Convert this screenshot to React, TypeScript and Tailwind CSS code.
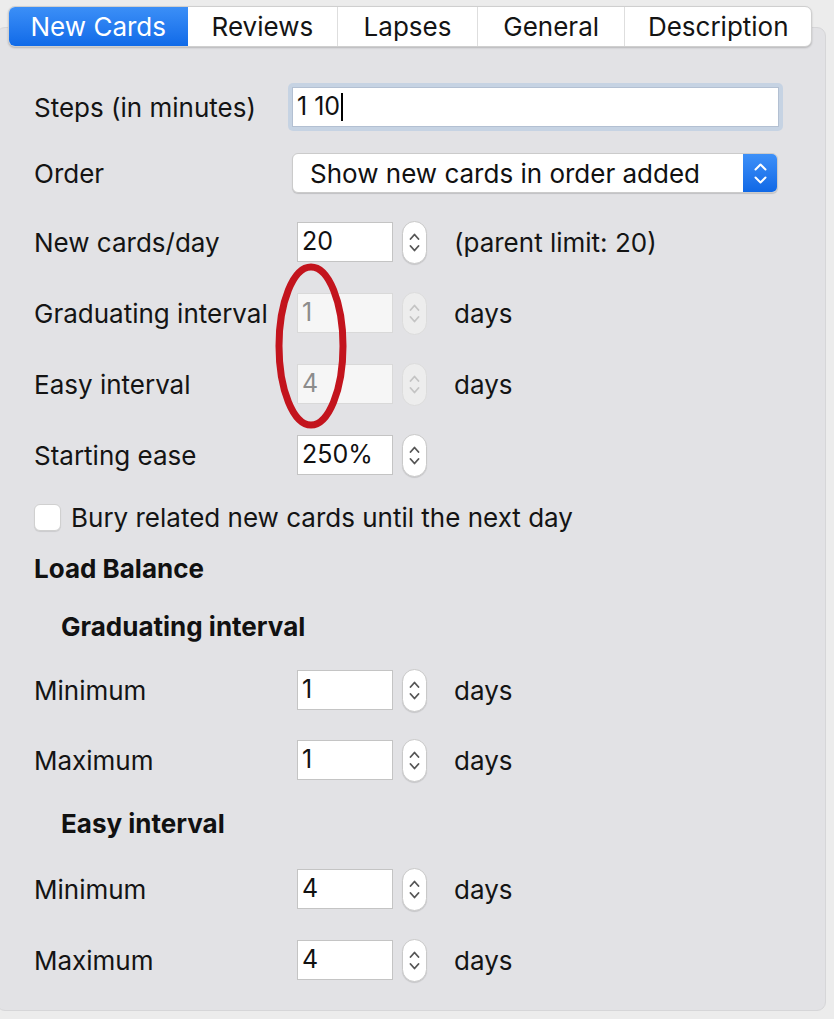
import React from "react";

const font = { fontFamily: '"Inter", "Liberation Sans", sans-serif' };

const tabs = ["New Cards", "Reviews", "Lapses", "General", "Description"];
const tabWidths = ["w-[179px]", "w-[150px]", "w-[140px]", "w-[148px]", "w-[187px]"];

function Stepper({ disabled }: { disabled?: boolean }) {
  const stroke = disabled ? "#c4c4c4" : "#555";
  return (
    <div
      className={`ml-[9px] w-[25px] h-[43px] rounded-full border flex flex-col items-center justify-center gap-[5px] ${
        disabled ? "bg-[#ededed] border-[#dcdcdc]" : "bg-white border-[#c9c9c9] shadow-[0_1px_1px_rgba(0,0,0,0.12)]"
      }`}
    >
      <svg width="11" height="7" viewBox="0 0 11 7">
        <path d="M1.5 6 L5.5 1.5 L9.5 6" fill="none" stroke={stroke} strokeWidth="1.8" strokeLinecap="round" strokeLinejoin="round" />
      </svg>
      <svg width="11" height="7" viewBox="0 0 11 7">
        <path d="M1.5 1 L5.5 5.5 L9.5 1" fill="none" stroke={stroke} strokeWidth="1.8" strokeLinecap="round" strokeLinejoin="round" />
      </svg>
    </div>
  );
}

function SpinRow({
  label,
  value,
  suffix,
  disabled,
  className,
}: {
  label: string;
  value: string;
  suffix?: string;
  disabled?: boolean;
  className?: string;
}) {
  return (
    <div className={`flex items-center h-[42px] ${className ?? ""}`}>
      <div className="w-[263px] shrink-0 text-[26px] text-[#141414]">{label}</div>
      <div
        className={`w-[96px] h-[40px] border flex items-center px-[4px] text-[25px] ${
          disabled ? "bg-[#f6f6f6] border-[#d9d9d9] text-[#8c8c8c]" : "bg-white border-[#c4c4c4] text-[#111]"
        }`}
      >
        {value}
      </div>
      <Stepper disabled={disabled} />
      {suffix && <div className="ml-[27px] text-[26px] text-[#141414]">{suffix}</div>}
    </div>
  );
}

export default function App() {
  return (
    <div className="w-[834px] h-[1019px] bg-[#ececec] overflow-hidden relative" style={font}>
      <div className="pt-[6px] pl-[8px] relative z-10">
        <div className="flex w-[804px] h-[41px] rounded-[7px] bg-white border border-[#cfcfcf] shadow-[0_1px_2px_rgba(0,0,0,0.2)] overflow-hidden">
          {tabs.map((t, i) => (
            <div
              key={t}
              className={`${tabWidths[i]} flex items-center justify-center text-[26px] ${
                i === 0
                  ? "bg-gradient-to-b from-[#3b8ff7] to-[#0f6ae8] text-white"
                  : "text-[#141414] border-l border-[#dedede]"
              } ${i === 1 ? "border-l-0" : ""}`}
            >
              {t}
            </div>
          ))}
        </div>
      </div>

      <div className="-mt-[20px] -ml-[4px] w-[830px] h-[984px] rounded-[9px] bg-[#e2e2e5] border border-[#d6d6d8] relative">
        <div className="pl-[37px] pt-[55px] flex flex-col">
          {/* Steps */}
          <div className="flex items-center h-[48px]">
            <div className="w-[254px] shrink-0 text-[26px] text-[#141414]">Steps (in minutes)</div>
            <div className="w-[495px] h-[48px] rounded-[5px] bg-[#c6d3e3] p-[4px]">
              <div className="w-full h-full bg-white border border-[#b3c0d2] flex items-center pl-[4px] text-[25px] text-[#111]">
                1 10<span className="inline-block w-[1.5px] h-[28px] bg-black ml-[1px]" />
              </div>
            </div>
          </div>

          {/* Order */}
          <div className="flex items-center h-[40px] mt-[22px]">
            <div className="w-[258px] shrink-0 text-[26px] text-[#141414]">Order</div>
            <div className="w-[486px] h-[40px] rounded-[6px] bg-white border border-[#cbcbcb] shadow-[0_1px_1px_rgba(0,0,0,0.15)] flex overflow-hidden">
              <div className="flex-1 flex items-center pl-[17px] text-[26px] text-[#111]">Show new cards in order added</div>
              <div className="w-[34px] bg-gradient-to-b from-[#3d90f8] to-[#0f68e6] flex flex-col items-center justify-center gap-[5px]">
                <svg width="13" height="8" viewBox="0 0 13 8">
                  <path d="M1.5 6.5 L6.5 1.5 L11.5 6.5" fill="none" stroke="white" strokeWidth="2" strokeLinecap="round" strokeLinejoin="round" />
                </svg>
                <svg width="13" height="8" viewBox="0 0 13 8">
                  <path d="M1.5 1.5 L6.5 6.5 L11.5 1.5" fill="none" stroke="white" strokeWidth="2" strokeLinecap="round" strokeLinejoin="round" />
                </svg>
              </div>
            </div>
          </div>

          <SpinRow label="New cards/day" value="20" suffix="(parent limit: 20)" className="mt-[28px]" />
          <SpinRow label="Graduating interval" value="1" suffix="days" disabled className="mt-[29px]" />
          <SpinRow label="Easy interval" value="4" suffix="days" disabled className="mt-[29px]" />
          <SpinRow label="Starting ease" value="250%" className="mt-[29px]" />

          <div className="flex items-center h-[28px] mt-[27px]">
            <div className="w-[27px] h-[27px] rounded-[6px] bg-white border border-[#d0d0d0] shadow-[0_1px_1px_rgba(0,0,0,0.1)]" />
            <div className="ml-[10px] text-[26px] text-[#141414]">Bury related new cards until the next day</div>
          </div>

          <div className="h-[30px] mt-[22px] flex items-center text-[26px] font-bold text-[#111]">Load Balance</div>
          <div className="h-[30px] mt-[28px] pl-[27px] flex items-center text-[26px] font-bold text-[#111]">Graduating interval</div>
          <SpinRow label="Minimum" value="1" suffix="days" className="mt-[28px]" />
          <SpinRow label="Maximum" value="1" suffix="days" className="mt-[28px]" />
          <div className="h-[30px] mt-[27px] pl-[27px] flex items-center text-[26px] font-bold text-[#111]">Easy interval</div>
          <SpinRow label="Minimum" value="4" suffix="days" className="mt-[30px]" />
          <SpinRow label="Maximum" value="4" suffix="days" className="mt-[29px]" />
        </div>
      </div>

      {/* red annotation ellipse */}
      <svg className="absolute left-[274px] top-[262px]" width="74" height="168" viewBox="0 0 74 168">
        <ellipse cx="37" cy="84" rx="32" ry="79" fill="none" stroke="#c3141d" strokeWidth="7" />
      </svg>
    </div>
  );
}
